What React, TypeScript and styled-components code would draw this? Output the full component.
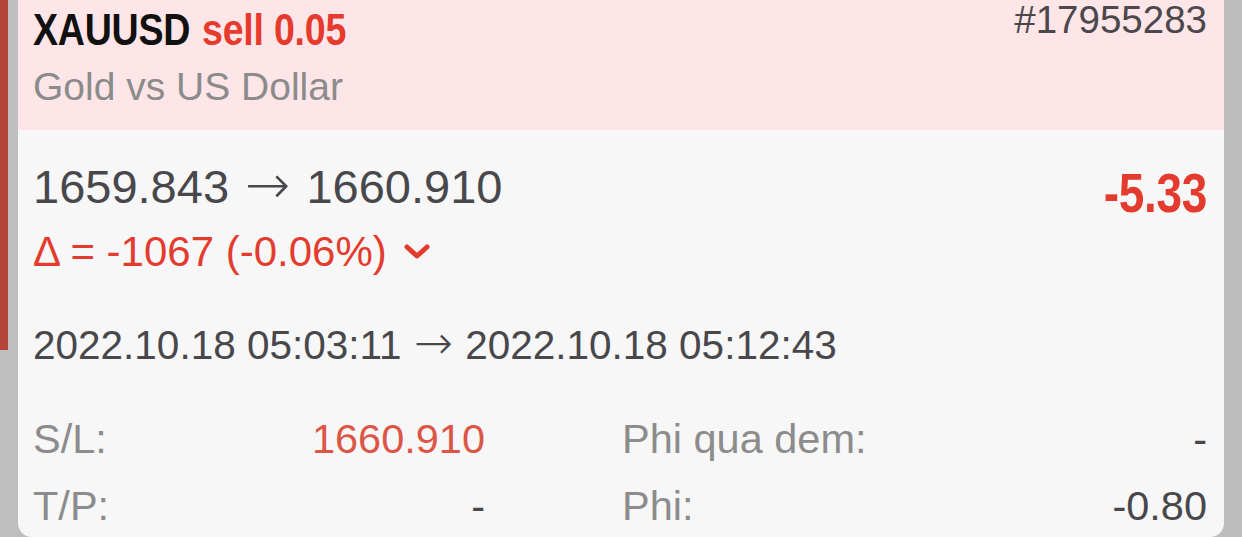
import React from "react";
import styled, { createGlobalStyle } from "styled-components";

const Global = createGlobalStyle`
  html, body { margin: 0; padding: 0; background: #bdbdbd; }
  body { font-family: "Liberation Sans", Arial, sans-serif; }
  * { box-sizing: border-box; }
`;

const Page = styled.div`
  display: flex;
  width: 1242px;
  height: 537px;
  overflow: hidden;
  background: #bdbdbd;
`;

const Rail = styled.div`
  width: 18px;
  flex: none;
  display: flex;
  background: #bfbfbf;
`;

const RedBar = styled.div`
  width: 8px;
  height: 350px;
  background: #b4433a;
`;

const Card = styled.div`
  flex: 1;
  margin-right: 18px;
  height: 537px;
  display: flex;
  flex-direction: column;
  background: #f7f7f7;
  border-radius: 0 0 14px 14px;
  overflow: hidden;
`;

const Header = styled.div`
  display: flex;
  justify-content: space-between;
  align-items: flex-start;
  background: #fee6e8;
  padding: 0 17px 16px 15px;
`;

const Col = styled.div`
  display: flex;
  flex-direction: column;
`;

const Condensed = styled.div<{ $origin: "left" | "right"; $scale: number }>`
  font-family: "Liberation Sans", Arial, sans-serif;
  font-weight: 700;
  white-space: nowrap;
  transform: scaleX(${(p) => p.$scale});
  transform-origin: ${(p) => p.$origin} center;
  letter-spacing: -0.3px;
`;

const Title = styled(Condensed)`
  font-size: 45px;
  line-height: 60px;
  color: #111;
`;

const Red = styled.span`
  color: #e63a2c;
  margin-left: 2px;
`;

const Subtitle = styled.div`
  font-size: 39px;
  line-height: 54px;
  color: #8b8b8b;
`;

const OrderNo = styled.div`
  font-size: 38.5px;
  line-height: 40px;
  color: #4b474b;
`;

const Body = styled.div`
  display: flex;
  flex-direction: column;
  padding: 29px 17px 0 15px;
`;

const PriceRow = styled.div`
  display: flex;
  justify-content: space-between;
  align-items: flex-start;
`;

const Prices = styled.div`
  font-size: 47px;
  line-height: 56px;
  color: #48484c;
  white-space: nowrap;
`;

const Arrow = styled.span<{ $gap: number }>`
  font-family: "DejaVu Sans", sans-serif;
  font-weight: 200;
  font-size: 1.15em;
  line-height: 0;
  margin: 0 ${(p) => p.$gap}px;
`;

const Delta = styled.div`
  display: flex;
  align-items: center;
  gap: 17px;
  margin-top: 12px;
  font-size: 42px;
  line-height: 50px;
  color: #e33b2e;
  white-space: nowrap;
`;

const Profit = styled(Condensed)`
  font-size: 56px;
  line-height: 67px;
  color: #e33b2e;
`;

const Times = styled.div`
  margin-top: 43px;
  font-size: 40.5px;
  line-height: 50px;
  color: #48484c;
  white-space: nowrap;
`;

const Grid = styled.div`
  margin-top: 35px;
  display: grid;
  grid-template-columns: 452px 1fr;
  column-gap: 137px;
`;

const Pair = styled.div`
  display: flex;
  justify-content: space-between;
  font-size: 41.5px;
  line-height: 67px;
`;

const Label = styled.span`
  color: #8c8c8c;
`;

const Value = styled.span<{ $red?: boolean }>`
  color: ${(p) => (p.$red ? "#dc5648" : "#48484c")};
`;

const Chevron = () => (
  <svg width="26" height="16" viewBox="0 0 26 16">
    <polyline
      points="3,3 13,12 23,3"
      fill="none"
      stroke="#e33b2e"
      strokeWidth="5"
      strokeLinecap="round"
      strokeLinejoin="round"
    />
  </svg>
);

export default function App() {
  return (
    <>
      <Global />
      <Page>
        <Rail>
          <RedBar />
        </Rail>
        <Card>
          <Header>
            <Col>
              <Title $origin="left" $scale={0.835}>
                XAUUSD <Red>sell 0.05</Red>
              </Title>
              <Subtitle>Gold vs US Dollar</Subtitle>
            </Col>
            <OrderNo>#17955283</OrderNo>
          </Header>
          <Body>
            <PriceRow>
              <Col>
                <Prices>
                  1659.843 <Arrow $gap={3}>→</Arrow> 1660.910
                </Prices>
                <Delta>
                  <span>Δ = -1067 (-0.06%)</span>
                  <Chevron />
                </Delta>
              </Col>
              <Profit $origin="right" $scale={0.82}>-5.33</Profit>
            </PriceRow>
            <Times>
              2022.10.18 05:03:11 <Arrow $gap={1}>→</Arrow> 2022.10.18 05:12:43
            </Times>
            <Grid>
              <Pair>
                <Label>S/L:</Label>
                <Value $red>1660.910</Value>
              </Pair>
              <Pair>
                <Label>Phi qua dem:</Label>
                <Value>-</Value>
              </Pair>
              <Pair>
                <Label>T/P:</Label>
                <Value>-</Value>
              </Pair>
              <Pair>
                <Label>Phi:</Label>
                <Value>-0.80</Value>
              </Pair>
            </Grid>
          </Body>
        </Card>
      </Page>
    </>
  );
}
